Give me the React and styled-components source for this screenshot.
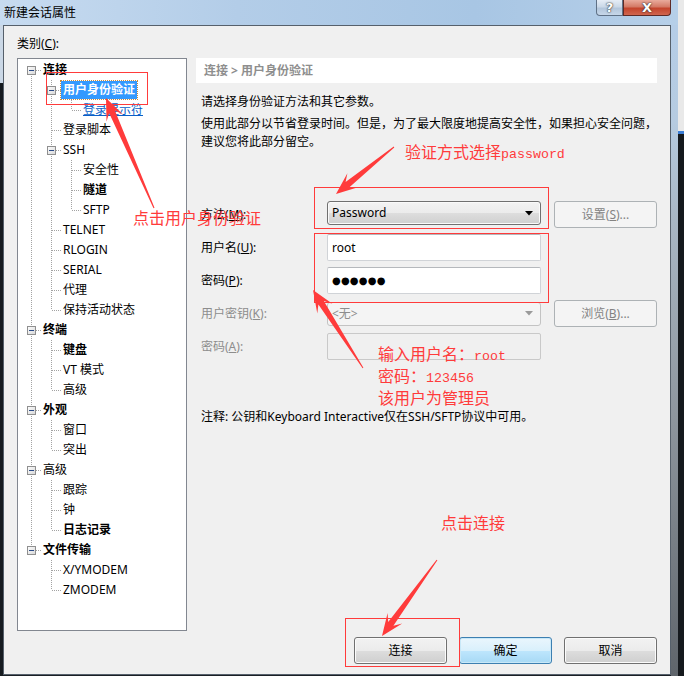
import React from "react";
import styled, { createGlobalStyle } from "styled-components";

const UI_FONT = `"Noto Sans", "Noto Sans CJK SC", sans-serif`;
const RED = "#ff3b3b";

const Global = createGlobalStyle`
  html, body { margin: 0; padding: 0; background: #1a1f25; }
  body { width: 684px; height: 676px; overflow: hidden; font-family: ${UI_FONT}; }
  #root { width: 684px; height: 676px; }
`;

const Screen = styled.div`
  position: relative;
  width: 684px;
  height: 676px;
  display: flex;
  background: #1a1f25;
`;

const Desk = styled.div`
  flex: 1;
  background: linear-gradient(#e9e9e9 0, #e9e9e9 131px, #3d7fd6 131px, #3d7fd6 134px, #15191d 134px);
`;

const Window = styled.div`
  width: 678px;
  display: flex;
  flex-direction: column;
`;

const TitleBar = styled.div`
  height: 25px;
  display: flex;
  align-items: flex-start;
  background: linear-gradient(90deg, #c7dbf0 0%, #b3cde8 35%, #a8c6e4 70%, #b6cfe8 100%);
`;

const TitleText = styled.div`
  flex: 1;
  padding-left: 4px;
  font: 12px/25px ${UI_FONT};
  color: #000;
`;

const CaptionGroup = styled.div`
  display: flex;
  margin-right: 7px;
`;

const CaptionBtn = styled.div`
  width: ${(p) => p.$w}px;
  height: 16px;
  box-sizing: border-box;
  display: flex;
  align-items: center;
  justify-content: center;
  font: bold 13px/1 "DejaVu Sans", sans-serif;
  color: #fff;
  text-shadow: 0 0 2px #333, 0 0 1px #222;
  border: 1px solid ${(p) => (p.$close ? "#5e2a26" : "#5f7186")};
  border-top: none;
  border-radius: ${(p) => (p.$close ? "0 0 4px 0" : "0 0 0 4px")};
  background: ${(p) =>
    p.$close
      ? "linear-gradient(#e9ab9c 0%, #d47a66 45%, #c4442c 55%, #d0664f 100%)"
      : "linear-gradient(#e6edf6 0%, #cbd9e8 45%, #b3c6db 55%, #c6d7e9 100%)"};
`;

const Body = styled.div`
  flex: 1;
  display: flex;
`;

const LeftEdge = styled.div`
  width: 3px;
  background: linear-gradient(#cbd8e6 0, #cbd8e6 58px, #161b20 58px);
`;

const RightFrame = styled.div`
  width: 7px;
  background: linear-gradient(#b5cde7 0%, #b6cbe0 15%, #a9b7c4 30%, #8e969e 60%, #5f656b 100%);
`;

const Client = styled.div`
  width: 668px;
  height: 650px;
  box-sizing: border-box;
  border: 1px solid #56606b;
  background: #f0f0f0;
  padding: 10px 13px 0 13px;
  display: flex;
  flex-direction: column;
`;

const Caption = styled.div`
  font: 12px/16px ${UI_FONT};
  color: #000;
  margin-bottom: 6px;
`;

const Main = styled.div`
  display: flex;
  height: 573px;
`;

const Tree = styled.div`
  width: 170px;
  box-sizing: border-box;
  border: 1px solid #828790;
  background: #fff;
  padding-left: 3px;
  padding-top: 1px;
`;

const Row = styled.div`
  height: 20px;
  display: flex;
  align-items: center;
`;

const Gutter = styled.svg`
  flex: none;
  display: block;
`;

const NodeLabel = styled.span`
  padding: 0 2px;
  height: 18px;
  font: ${(p) => (p.$bold ? 700 : 400)} 12px/18px ${UI_FONT};
  color: ${(p) => (p.$sel ? "#fff" : p.$link ? "#0a5fc8" : "#000")};
  text-decoration: ${(p) => (p.$link ? "underline" : "none")};
  background: ${(p) => (p.$sel ? "#3399ff" : "transparent")};
  outline: ${(p) => (p.$sel ? "1px dotted #c98a3c" : "none")};
  white-space: nowrap;
`;

const Panel = styled.div`
  width: 461px;
  margin-left: 9px;
  display: flex;
  flex-direction: column;
`;

const Header = styled.div`
  height: 25px;
  background: #fff;
  padding-left: 8px;
  font: 700 12px/25px ${UI_FONT};
  color: #8e8e8e;
`;

const Text = styled.div`
  padding-left: 5px;
  margin-top: ${(p) => p.$mt || 0}px;
  font: 12px/18px ${UI_FONT};
  color: #000;
`;

const Form = styled.div`
  margin-top: 50px;
  padding-left: 5px;
  display: grid;
  grid-template-columns: 113px 214px 103px;
  grid-template-rows: repeat(5, 27px);
  column-gap: 13px;
  row-gap: 6px;
`;

const Label = styled.div`
  align-self: center;
  font: 12px/16px ${UI_FONT};
  color: ${(p) => (p.$disabled ? "#8d8d8d" : "#000")};
`;

const Combo = styled.div`
  align-self: ${(p) => (p.$disabled ? "center" : "start")};
  height: 24px;
  box-sizing: border-box;
  border: 1px solid ${(p) => (p.$disabled ? "#c3c3c3" : "#707070")};
  border-radius: 3px;
  background: ${(p) =>
    p.$disabled
      ? "#f4f4f4"
      : "linear-gradient(#f3f3f3 0%, #ebebeb 50%, #dddddd 51%, #cfcfcf 100%)"};
  box-shadow: ${(p) => (p.$disabled ? "none" : "inset 0 0 0 1px #fafafa")};
  display: flex;
  align-items: center;
  justify-content: space-between;
  padding: 0 7px 0 4px;
  font: 12px/16px ${UI_FONT};
  color: ${(p) => (p.$disabled ? "#8d8d8d" : "#000")};
`;

const Field = styled.div`
  box-sizing: border-box;
  height: 27px;
  border: 1px solid ${(p) => (p.$disabled ? "#c9c9c9" : "#d0d3d7")};
  border-top-color: ${(p) => (p.$disabled ? "#c9c9c9" : "#b5b8bc")};
  border-radius: 2px;
  background: ${(p) => (p.$disabled ? "#f0f0f0" : "#fff")};
  display: flex;
  align-items: center;
  padding-left: 4px;
  font: 12px/16px ${UI_FONT};
  color: #000;
`;

const Mask = styled.span`
  font: 10px/10px "DejaVu Sans", sans-serif;
  letter-spacing: 0.2px;
  color: #000;
`;

const SideBtn = styled.div`
  box-sizing: border-box;
  border: 1px solid #adb2b5;
  border-radius: 3px;
  background: #f4f4f4;
  display: flex;
  align-items: center;
  justify-content: center;
  font: 12px/16px ${UI_FONT};
  color: #838383;
`;

const Footer = styled.div`
  margin-top: 6px;
  display: flex;
  justify-content: flex-end;
  gap: 12px;
`;

const Btn = styled.div`
  width: 93px;
  height: 27px;
  box-sizing: border-box;
  border: 1px solid ${(p) => (p.$def ? "#3c7fb1" : "#707070")};
  border-radius: 3px;
  background: ${(p) =>
    p.$def
      ? "linear-gradient(#eaf6fd 0%, #d9f0fc 50%, #bee6fd 51%, #a7d9f5 100%)"
      : "linear-gradient(#f2f2f2 0%, #ebebeb 50%, #dddddd 51%, #cfcfcf 100%)"};
  box-shadow: inset 0 0 0 1px ${(p) => (p.$def ? "#c8e8f8" : "#fbfbfb")};
  display: flex;
  align-items: center;
  justify-content: center;
  font: 12px/16px ${UI_FONT};
  color: #000;
`;

const Overlay = styled.svg`
  position: absolute;
  left: 0;
  top: 0;
  pointer-events: none;
`;

const RedNote = styled.div`
  position: absolute;
  left: ${(p) => p.$x}px;
  top: ${(p) => p.$y}px;
  color: ${RED};
  font: 16px/19px "Noto Sans CJK SC", sans-serif;
  white-space: nowrap;
  pointer-events: none;
`;

const Mono = styled.span`
  font-family: "Liberation Mono", monospace;
  font-size: 13.3px;
`;

const treeItems = [
  { l: 0, t: "连接", b: 1, exp: 1 },
  { l: 1, t: "用户身份验证", b: 1, exp: 1, sel: 1 },
  { l: 2, t: "登录提示符", link: 1 },
  { l: 1, t: "登录脚本" },
  { l: 1, t: "SSH", exp: 1 },
  { l: 2, t: "安全性" },
  { l: 2, t: "隧道", b: 1 },
  { l: 2, t: "SFTP" },
  { l: 1, t: "TELNET" },
  { l: 1, t: "RLOGIN" },
  { l: 1, t: "SERIAL" },
  { l: 1, t: "代理" },
  { l: 1, t: "保持活动状态" },
  { l: 0, t: "终端", b: 1, exp: 1 },
  { l: 1, t: "键盘", b: 1 },
  { l: 1, t: "VT 模式" },
  { l: 1, t: "高级" },
  { l: 0, t: "外观", b: 1, exp: 1 },
  { l: 1, t: "窗口" },
  { l: 1, t: "突出" },
  { l: 0, t: "高级", exp: 1 },
  { l: 1, t: "跟踪" },
  { l: 1, t: "钟" },
  { l: 1, t: "日志记录", b: 1 },
  { l: 0, t: "文件传输", b: 1, exp: 1 },
  { l: 1, t: "X/YMODEM" },
  { l: 1, t: "ZMODEM" },
];

function buildTree(items) {
  const hasNextAt = (level, from) => {
    for (let j = from + 1; j < items.length; j++) {
      if (items[j].l < level) return false;
      if (items[j].l === level) return true;
    }
    return false;
  };
  return items.map((it, i) => {
    const cont = [];
    for (let k = 0; k < it.l; k++) {
      let a = i;
      while (items[a].l !== k) a--;
      cont.push(hasNextAt(k, a));
    }
    return { ...it, cont, next: hasNextAt(it.l, i), first: i === 0 };
  });
}

const DOT = { stroke: "#a3a3a3", strokeWidth: 1, strokeDasharray: "1 1", shapeRendering: "crispEdges" };

function TreeNode({ n }) {
  const cells = [];
  n.cont.forEach((c, k) => {
    cells.push(
      <Gutter key={k} width="20" height="20">
        {c && <line x1="10.5" y1="0" x2="10.5" y2="20" {...DOT} />}
      </Gutter>
    );
  });
  cells.push(
    <Gutter key="own" width="20" height="20">
      {!n.first && <line x1="10.5" y1="0" x2="10.5" y2="10" {...DOT} />}
      {n.next && <line x1="10.5" y1="10" x2="10.5" y2="20" {...DOT} />}
      <line x1={n.exp ? 15 : 11} y1="10.5" x2="20" y2="10.5" {...DOT} />
      {n.exp && (
        <g shapeRendering="crispEdges">
          <defs>
            <linearGradient id="exg" x1="0" y1="0" x2="1" y2="1">
              <stop offset="0" stopColor="#ffffff" />
              <stop offset="1" stopColor="#d6d6d6" />
            </linearGradient>
          </defs>
          <rect x="6.5" y="6.5" width="8" height="8" fill="url(#exg)" stroke="#8f8f8f" />
          <line x1="8" y1="10.5" x2="13" y2="10.5" stroke="#2a4a86" />
        </g>
      )}
    </Gutter>
  );
  return (
    <Row>
      {cells}
      <NodeLabel $bold={n.b} $sel={n.sel} $link={n.link}>
        {n.t}
      </NodeLabel>
    </Row>
  );
}

function arrowPts(tx, ty, hx, hy) {
  const dx = hx - tx;
  const dy = hy - ty;
  const L = Math.hypot(dx, dy);
  const ux = dx / L;
  const uy = dy / L;
  const nx = -uy;
  const ny = ux;
  const neck = 15;
  const back = 22;
  const hw = 9;
  const sw = 3.2;
  const tw = 0.5;
  const Nx = hx - ux * neck;
  const Ny = hy - uy * neck;
  const Bx = hx - ux * back;
  const By = hy - uy * back;
  const pts = [
    [tx + nx * tw, ty + ny * tw],
    [Nx + nx * sw, Ny + ny * sw],
    [Bx + nx * hw, By + ny * hw],
    [hx, hy],
    [Bx - nx * hw, By - ny * hw],
    [Nx - nx * sw, Ny - ny * sw],
    [tx - nx * tw, ty - ny * tw],
  ];
  return pts.map((p) => p[0].toFixed(1) + "," + p[1].toFixed(1)).join(" ");
}

const ComboArrow = ({ color }) => (
  <svg width="8" height="5" viewBox="0 0 8 5">
    <path d="M0 0H8L4 4.5Z" fill={color} />
  </svg>
);

export default function App() {
  const nodes = buildTree(treeItems);
  return (
    <>
      <Global />
      <Screen>
        <Window>
          <TitleBar>
            <TitleText>新建会话属性</TitleText>
            <CaptionGroup>
              <CaptionBtn $w={27}>?</CaptionBtn>
              <CaptionBtn $w={48} $close>
                X
              </CaptionBtn>
            </CaptionGroup>
          </TitleBar>
          <Body>
            <LeftEdge />
            <Client>
              <Caption>
                类别(<u>C</u>):
              </Caption>
              <Main>
                <Tree>
                  {nodes.map((n, i) => (
                    <TreeNode key={i} n={n} />
                  ))}
                </Tree>
                <Panel>
                  <Header>连接 &gt; 用户身份验证</Header>
                  <Text $mt={10}>请选择身份验证方法和其它参数。</Text>
                  <Text $mt={4}>
                    使用此部分以节省登录时间。但是，为了最大限度地提高安全性，如果担心安全问题，
                    <br />
                    建议您将此部分留空。
                  </Text>
                  <Form>
                    <Label>
                      方法(<u>M</u>):
                    </Label>
                    <Combo>
                      <span>Password</span>
                      <ComboArrow color="#000" />
                    </Combo>
                    <SideBtn>
                      设置(<u>S</u>)...
                    </SideBtn>

                    <Label>
                      用户名(<u>U</u>):
                    </Label>
                    <Field>root</Field>
                    <div />

                    <Label>
                      密码(<u>P</u>):
                    </Label>
                    <Field>
                      <Mask>●●●●●●</Mask>
                    </Field>
                    <div />

                    <Label $disabled>
                      用户密钥(<u>K</u>):
                    </Label>
                    <Combo $disabled>
                      <span>&lt;无&gt;</span>
                      <ComboArrow color="#9a9a9a" />
                    </Combo>
                    <SideBtn>
                      浏览(<u>B</u>)...
                    </SideBtn>

                    <Label $disabled>
                      密码(<u>A</u>):
                    </Label>
                    <Field $disabled />
                    <div />
                  </Form>
                  <Text $mt={48}>注释: 公钥和Keyboard Interactive仅在SSH/SFTP协议中可用。</Text>
                </Panel>
              </Main>
              <Footer>
                <Btn>连接</Btn>
                <Btn $def>确定</Btn>
                <Btn>取消</Btn>
              </Footer>
            </Client>
            <RightFrame />
          </Body>
        </Window>
        <Desk />

        <RedNote $x={405} $y={142}>
          验证方式选择<Mono>password</Mono>
        </RedNote>
        <RedNote $x={133} $y={208}>点击用户身份验证</RedNote>
        <RedNote $x={378} $y={344}>
          输入用户名：<Mono>root</Mono>
          <br />
          密码：<Mono>123456</Mono>
          <br />
          该用户为管理员
        </RedNote>
        <RedNote $x={441} $y={513}>点击连接</RedNote>

        <Overlay width="684" height="676" viewBox="0 0 684 676">
          <g fill="none" stroke={RED} strokeWidth="1" shapeRendering="crispEdges">
            <rect x="46.5" y="72.5" width="101" height="32" />
            <rect x="314.5" y="187.5" width="234" height="41" />
            <rect x="314.5" y="233.5" width="234" height="69" />
            <rect x="345.5" y="618.5" width="114" height="48" />
          </g>
          <g fill={RED}>
            <polygon points={arrowPts(394, 147, 336, 194)} />
            <polygon points={arrowPts(154, 208, 106, 98)} />
            <polygon points={arrowPts(363, 368, 313, 290)} />
            <polygon points={arrowPts(437, 560, 382, 636)} />
          </g>
        </Overlay>
      </Screen>
    </>
  );
}
